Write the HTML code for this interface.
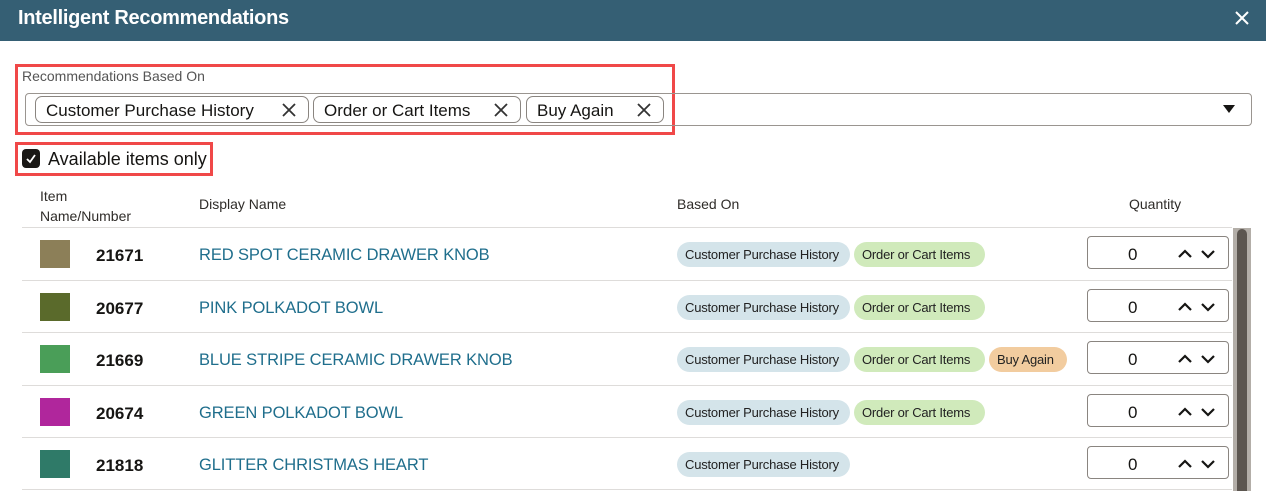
<!DOCTYPE html>
<html><head><meta charset="utf-8"><style>
*{box-sizing:border-box;margin:0;padding:0}
body{width:1266px;height:491px;overflow:hidden;background:#fff;font-family:"Liberation Sans",sans-serif;color:#161513;position:relative}
.hdr{position:absolute;left:0;top:0;width:1266px;height:41px;background:#355f74;color:#fff}
.hdr h1{position:absolute;left:18px;top:7px;font-size:20px;font-weight:bold;letter-spacing:-0.3px}
.abs{position:absolute}
.red{position:absolute;border:3px solid #f04848}
.chip{position:absolute;top:96px;height:27px;border:1px solid #8a8580;border-radius:7px;font-size:17px;padding:4px 0 0 10px;white-space:nowrap}
.chip svg{position:absolute;right:12px;top:6px}
.th{position:absolute;font-size:14px;color:#2f2c29}
.row{position:absolute;left:22px;width:1210px;height:53px;border-top:1px solid #dedcda}
.thumb{position:absolute;left:18px;top:12px;width:30px;height:28px}
.num{position:absolute;left:74px;top:18px;font-size:17px;font-weight:bold}
.nm{position:absolute;left:177px;top:18px;font-size:16.5px;color:#1f6e8c;white-space:nowrap;letter-spacing:-0.1px}
.tag{position:absolute;top:14px;height:25px;border-radius:13px;font-size:13px;padding:5px 8px 0 8px;white-space:nowrap;color:#222;letter-spacing:-0.2px}
.b1{background:#d4e4ea;left:655px;width:173px}
.b2{background:#d0eabb;left:832px;width:131px}
.b3{background:#f2cc9f;left:967px;width:78px}
.qty{position:absolute;left:1065px;top:8px;width:142px;height:33px;border:1px solid #8a8580;border-radius:4px}
.qty span{position:absolute;left:40px;top:8px;font-size:17px}
.qty svg{position:absolute;left:88px;top:10px}
</style></head><body>
<div class="hdr"><h1>Intelligent Recommendations</h1>
<svg class="abs" style="left:1235px;top:11px" width="14" height="14" viewBox="0 0 14 14"><path d="M1 1L13 13M13 1L1 13" stroke="#fff" stroke-width="2"/></svg></div>

<div class="red" style="left:15px;top:64px;width:660px;height:71px"></div>
<div class="abs" style="left:22px;top:68px;font-size:14px;color:#555">Recommendations Based On</div>
<div class="abs" style="left:25px;top:93px;width:1227px;height:33px;border:1px solid #9a9590;border-radius:4px"></div>
<svg class="abs" style="left:1222px;top:104px" width="14" height="10"><path d="M1 1H13L7 9Z" fill="#161513"/></svg>
<div class="chip" style="left:35px;width:274px">Customer Purchase History<svg width="14" height="14"><path d="M1 1L13 13M13 1L1 13" stroke="#333" stroke-width="1.8"/></svg></div>
<div class="chip" style="left:313px;width:208px">Order or Cart Items<svg width="14" height="14"><path d="M1 1L13 13M13 1L1 13" stroke="#333" stroke-width="1.8"/></svg></div>
<div class="chip" style="left:526px;width:138px">Buy Again<svg width="14" height="14"><path d="M1 1L13 13M13 1L1 13" stroke="#333" stroke-width="1.8"/></svg></div>

<div class="red" style="left:15px;top:142px;width:198px;height:34px"></div>
<div class="abs" style="left:22px;top:149px;width:18px;height:19px;background:#1a1816;border-radius:4px"></div>
<svg class="abs" style="left:24px;top:152px" width="14" height="13"><path d="M3 7L6 10L11 3" stroke="#fff" stroke-width="1.8" fill="none"/></svg>
<div class="abs" style="left:48px;top:149px;font-size:18px">Available items only</div>

<div class="th" style="left:40px;top:186px;line-height:20px">Item<br>Name/Number</div>
<div class="th" style="left:199px;top:196px">Display Name</div>
<div class="th" style="left:677px;top:196px">Based On</div>
<div class="th" style="left:1129px;top:196px">Quantity</div>

<div class="row" style="top:227px"><div class="thumb" style="background:#8c7f58"></div><div class="num">21671</div><div class="nm">RED SPOT CERAMIC DRAWER KNOB</div><div class="tag b1">Customer Purchase History</div><div class="tag b2">Order or Cart Items</div><div class="qty"><span>0</span><svg width="42" height="12"><path d="M3 10L9 4L15 10M26 4L32 10L38 4" stroke="#161513" stroke-width="2.2" fill="none"/></svg></div></div>
<div class="row" style="top:280px"><div class="thumb" style="background:#5a6a2b"></div><div class="num">20677</div><div class="nm">PINK POLKADOT BOWL</div><div class="tag b1">Customer Purchase History</div><div class="tag b2">Order or Cart Items</div><div class="qty"><span>0</span><svg width="42" height="12"><path d="M3 10L9 4L15 10M26 4L32 10L38 4" stroke="#161513" stroke-width="2.2" fill="none"/></svg></div></div>
<div class="row" style="top:332px"><div class="thumb" style="background:#4a9e58"></div><div class="num">21669</div><div class="nm">BLUE STRIPE CERAMIC DRAWER KNOB</div><div class="tag b1">Customer Purchase History</div><div class="tag b2">Order or Cart Items</div><div class="tag b3">Buy Again</div><div class="qty"><span>0</span><svg width="42" height="12"><path d="M3 10L9 4L15 10M26 4L32 10L38 4" stroke="#161513" stroke-width="2.2" fill="none"/></svg></div></div>
<div class="row" style="top:385px"><div class="thumb" style="background:#b0269c"></div><div class="num">20674</div><div class="nm">GREEN POLKADOT BOWL</div><div class="tag b1">Customer Purchase History</div><div class="tag b2">Order or Cart Items</div><div class="qty"><span>0</span><svg width="42" height="12"><path d="M3 10L9 4L15 10M26 4L32 10L38 4" stroke="#161513" stroke-width="2.2" fill="none"/></svg></div></div>
<div class="row" style="top:437px"><div class="thumb" style="background:#2f7a68"></div><div class="num">21818</div><div class="nm">GLITTER CHRISTMAS HEART</div><div class="tag b1">Customer Purchase History</div><div class="qty"><span>0</span><svg width="42" height="12"><path d="M3 10L9 4L15 10M26 4L32 10L38 4" stroke="#161513" stroke-width="2.2" fill="none"/></svg></div></div>
<div class="abs" style="left:22px;top:489px;width:1210px;height:1px;background:#dedcda"></div>

<div class="abs" style="left:1233px;top:228px;width:18px;height:263px;background:#b3aea8"></div>
<div class="abs" style="left:1237px;top:229px;width:10px;height:262px;background:#5c5650;border-radius:5px 5px 0 0"></div>
</body></html>
